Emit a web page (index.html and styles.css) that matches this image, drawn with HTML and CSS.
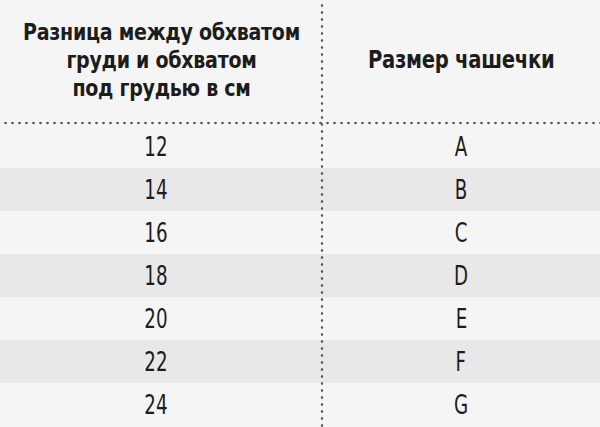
FILE: index.html
```html
<!DOCTYPE html>
<html lang="ru">
<head>
<meta charset="utf-8">
<link rel="stylesheet" href="styles.css">
</head>
<body>
<div class="table">
  <div class="row head">
    <div class="cell left"><span class="h-left">Разница между обхватом<br>груди и обхватом<br>под грудью в см</span></div>
    <div class="cell right"><span class="h-right">Размер чашечки</span></div>
  </div>
  <div class="row"><div class="cell left num"><span class="v">12</span></div><div class="cell right"><span class="v">A</span></div></div>
  <div class="row stripe"><div class="cell left num"><span class="v">14</span></div><div class="cell right"><span class="v">B</span></div></div>
  <div class="row"><div class="cell left num"><span class="v">16</span></div><div class="cell right"><span class="v">C</span></div></div>
  <div class="row stripe"><div class="cell left num"><span class="v">18</span></div><div class="cell right"><span class="v">D</span></div></div>
  <div class="row"><div class="cell left num"><span class="v">20</span></div><div class="cell right"><span class="v">E</span></div></div>
  <div class="row stripe"><div class="cell left num"><span class="v">22</span></div><div class="cell right"><span class="v">F</span></div></div>
  <div class="row"><div class="cell left num"><span class="v">24</span></div><div class="cell right"><span class="v">G</span></div></div>
</div>
</body>
</html>
```
FILE: styles.css
```css
html, body {
  margin: 0;
  padding: 0;
  background: #f5f5f5;
}
body {
  width: 600px;
  height: 427px;
  overflow: hidden;
  color: #1c1c1c;
}
.table {
  position: relative;
  width: 600px;
  height: 427px;
}
.table::after {
  content: "";
  position: absolute;
  left: 320px;
  top: 0;
  bottom: 0;
  width: 4px;
  background-image: radial-gradient(circle at center, #555 0, #555 0.9px, rgba(85,85,85,0) 1.6px);
  background-size: 4px 7px;
  background-repeat: repeat-y;
  background-position: 0 2px;
}
.row {
  display: grid;
  grid-template-columns: 322px 278px;
  height: 43px;
}
.row.stripe {
  background: #e8e8e8;
}
.row.head {
  height: 125px;
  background-image: radial-gradient(circle at center, #555 0, #555 0.9px, rgba(85,85,85,0) 1.6px);
  background-size: 7px 4px;
  background-repeat: repeat-x;
  background-position: 2px 121px;
}
.cell {
  display: flex;
  align-items: center;
  justify-content: center;
}
.head .cell {
  padding-bottom: 6px;
  box-sizing: border-box;
}
.h-left {
  display: inline-block;
  font-family: "DejaVu Sans Condensed", "DejaVu Sans", sans-serif;
  font-stretch: condensed;
  font-weight: bold;
  font-size: 23px;
  line-height: 28px;
  text-align: center;
  letter-spacing: -0.3px;
  white-space: nowrap;
  transform: scaleX(0.92);
}
.h-right {
  display: inline-block;
  font-family: "DejaVu Sans Condensed", "DejaVu Sans", sans-serif;
  font-stretch: condensed;
  font-weight: bold;
  font-size: 25px;
  letter-spacing: -0.3px;
  white-space: nowrap;
  transform: scaleX(0.87);
}
.num {
  padding-right: 10px;
}
.v {
  display: inline-block;
  font-family: "DejaVu Sans Condensed", sans-serif;
  font-stretch: condensed;
  font-size: 26px;
  line-height: 26px;
  transform: scaleX(0.78);
}
```
